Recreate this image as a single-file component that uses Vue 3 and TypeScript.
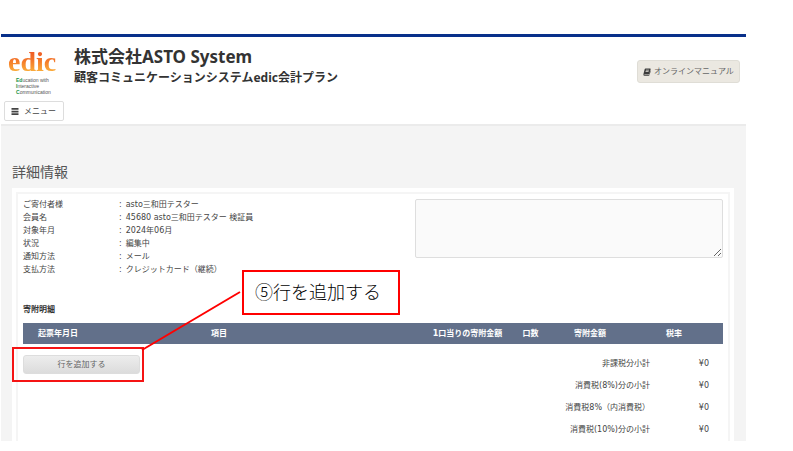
<script setup lang="ts">
interface Detail {
  label: string
  value: string
}
interface Total {
  label: string
  amount: string
}

const details: Detail[] = [
  { label: 'ご寄付者様', value: 'asto三和田テスター' },
  { label: '会員名', value: '45680 asto三和田テスター 検証員' },
  { label: '対象年月', value: '2024年06月' },
  { label: '状況', value: '編集中' },
  { label: '通知方法', value: 'メール' },
  { label: '支払方法', value: 'クレジットカード（継続）' },
]

const totals: Total[] = [
  { label: '非課税分小計', amount: '¥0' },
  { label: '消費税(8%)分の小計', amount: '¥0' },
  { label: '消費税8%（内消費税）', amount: '¥0' },
  { label: '消費税(10%)分の小計', amount: '¥0' },
]
</script>

<template>
  <div class="page">
    <header class="header">
      <div class="brand-row">
        <a href="#" class="logo">
          <span class="logo-word">edic</span>
          <span class="logo-lines">
            <span><b>Ed</b>ucation with</span>
            <span><b>I</b>nteractive</span>
            <span><b>C</b>ommunication</span>
          </span>
        </a>
        <div class="titles">
          <h1>株式会社ASTO System</h1>
          <p>顧客コミュニケーションシステムedic会計プラン</p>
        </div>
        <a href="#" class="manual">
          <svg viewBox="0 0 16 16" aria-hidden="true">
            <path
              fill="#3c3c3c"
              fill-rule="evenodd"
              d="M5 1h9.2q1.5 0 1.1 1.5L12.700 11.500Q12.300 13 10.800 13H3.200q-.9 0-.7.6.2.500.9.500H11.500q.8 0 1-.8L14.900 5q.8.500.5 1.500L13 14q-.4 1.500-1.800 1.500H3.100Q.4 15.500.8 12.500L3.300 2.500Q3.700 1 5 1ZM6 3.700l-.3 1.100h6l.3-1.100ZM5.300 6.200 5 7.300h6l.3-1.100Z"
            />
          </svg>
          オンラインマニュアル
        </a>
      </div>
      <button type="button" class="menu">
        <svg viewBox="0 0 8 8" aria-hidden="true">
          <path fill="#444" d="M0 0h8v2H0zM0 3h8v2H0zM0 6h8v2H0z" />
        </svg>
        メニュー
      </button>
    </header>

    <main class="content">
      <h2>詳細情報</h2>
      <div class="card">
        <section class="panel">
          <div class="summary">
            <dl class="details">
              <template v-for="d in details" :key="d.label">
                <dt>{{ d.label }}</dt>
                <dd><span>:</span>{{ d.value }}</dd>
              </template>
            </dl>
            <textarea class="memo" aria-label="備考"></textarea>
          </div>

          <h3>寄附明細</h3>
          <table class="items">
            <thead>
              <tr>
                <th class="c-date">起票年月日</th>
                <th class="c-item">項目</th>
                <th class="c-unit">1口当りの寄附金額</th>
                <th class="c-count">口数</th>
                <th class="c-amount">寄附金額</th>
                <th class="c-rate">税率</th>
              </tr>
            </thead>
          </table>

          <div class="below">
            <div class="add-wrap">
              <button type="button" class="add">行を追加する</button>
              <span class="highlight"></span>
            </div>
            <table class="totals">
              <tbody>
                <tr v-for="t in totals" :key="t.label">
                  <th scope="row">{{ t.label }}</th>
                  <td>{{ t.amount }}</td>
                </tr>
              </tbody>
            </table>
          </div>
        </section>
      </div>
    </main>

    <svg class="leader" viewBox="0 0 100 60" aria-hidden="true">
      <path d="M1 59 99 1" stroke="#f00" stroke-width="2" />
    </svg>
    <div class="callout">⑤行を追加する</div>
  </div>
</template>

<style>
body {
  background: #fff;
}
</style>

<style scoped>
* {
  box-sizing: border-box;
}
.page {
  position: relative;
  margin: 34px 47px 10px 1px;
  font-family: "DejaVu Sans", "Noto Sans CJK JP", sans-serif;
  font-size: 8px;
  line-height: 13px;
  color: #444;
}
h1, h2, h3, p, dl, dd {
  margin: 0;
}
button {
  font: inherit;
  color: inherit;
}
.header {
  border-top: 3px solid #08308a;
  border-bottom: 2px solid #ebebeb;
  padding: 8px 6px 3px 3px;
}
.brand-row {
  display: flex;
  align-items: flex-start;
  height: 56px;
}
.logo {
  width: 70px;
  padding-left: 4px;
  flex: none;
  text-decoration: none;
  color: #555;
}
.logo-word {
  display: block;
  height: 32px;
  font: bold 28px/34px "Liberation Serif", serif;
  background: linear-gradient(#ee5a26 20%, #f47a2a 50%, #fbb03b 85%);
  background-clip: text;
  -webkit-background-clip: text;
  color: transparent;
}
.logo-lines {
  display: block;
  padding-left: 8px;
  font-family: "Liberation Sans", sans-serif;
  font-size: 5px;
  line-height: 6px;
}
.logo-lines span {
  display: block;
}
.logo-lines b {
  color: #159447;
}
.titles {
  flex: 1;
  padding-top: 1px;
  color: #333;
  font-family: "Noto Sans", "Noto Sans CJK JP", sans-serif;
  font-weight: bold;
}
h1 {
  font-size: 17px;
  line-height: 22px;
}
.titles p {
  font-size: 12px;
  line-height: 20px;
}
.manual {
  display: flex;
  align-items: center;
  justify-content: center;
  gap: 3px;
  height: 23px;
  width: 103px;
  margin-top: 15px;
  border: 1px solid #dfddd6;
  border-radius: 3px;
  background: #ebe8e1;
  color: #666;
  text-decoration: none;
}
.manual svg {
  width: 8px;
  height: 8px;
}
.menu {
  display: flex;
  align-items: center;
  gap: 5px;
  height: 20px;
  width: 60px;
  padding: 0 6px;
  border: 1px solid #ddd;
  border-radius: 2px;
  background: #fff;
}
.menu svg {
  width: 8px;
  height: 7px;
}
.content {
  background: #f4f4f4;
  padding: 35px 12px 0 11px;
}
h2 {
  font-size: 14px;
  line-height: 22px;
  font-weight: normal;
  color: #555;
}
.card {
  margin-top: 5px;
  padding: 4px 4px 0;
  background: #fff;
}
.panel {
  border: 2px solid #f5f5f5;
  border-bottom: 0;
  padding: 4px 5px 1px;
}
.summary {
  display: flex;
  justify-content: space-between;
  align-items: flex-start;
}
.details {
  display: grid;
  grid-template-columns: 96px 1fr;
  flex: 1;
}
.details dd {
  display: flex;
  gap: 4px;
}
.memo {
  display: block;
  width: 44%;
  height: 59px;
  margin-top: 1px;
  border: 1px solid #dedede;
  border-radius: 2px;
  background: #fafafa;
}
h3 {
  margin-top: 27px;
  font-size: 8px;
  line-height: 13px;
  color: #333;
}
.items {
  width: 100%;
  margin-top: 7px;
  border-collapse: collapse;
  table-layout: fixed;
  background: #62708a;
  color: #fff;
}
.items th {
  height: 21px;
  padding: 0;
  white-space: nowrap;
}
.c-date { width: 10%; }
.items .c-item { padding-right: 12%; }
.c-unit { width: 11%; }
.c-count { width: 7%; }
.c-amount { width: 10%; }
.c-rate { width: 14%; }
.below {
  display: flex;
  justify-content: space-between;
  align-items: flex-start;
  padding: 8px 14px 0 0;
}
.add-wrap {
  position: relative;
  margin-top: 3px;
}
.add {
  display: block;
  width: 117px;
  height: 19px;
  padding: 0;
  border: 1px solid #ddd;
  border-radius: 3px;
  background: linear-gradient(#ededed, #dcdcdc);
  color: #666;
}
.highlight {
  position: absolute;
  inset: -8px -4px -8px -11px;
  border: 2px solid #f51414;
  pointer-events: none;
}
.totals {
  border-collapse: collapse;
}
.totals tr {
  height: 22px;
}
.totals th,
.totals td {
  padding: 0;
  font-weight: normal;
  text-align: right;
}
.totals td {
  width: 59px;
}
.leader {
  position: absolute;
  left: 140px;
  top: 257px;
  width: 100px;
  height: 60px;
}
.callout {
  position: absolute;
  left: 241px;
  top: 236px;
  width: 158px;
  height: 45px;
  padding-left: 11px;
  border: 2px solid #f00;
  background: #fff;
  color: #000;
  font-family: "Noto Sans CJK JP", sans-serif;
  font-size: 18px;
  font-weight: 300;
  line-height: 38px;
}
</style>
